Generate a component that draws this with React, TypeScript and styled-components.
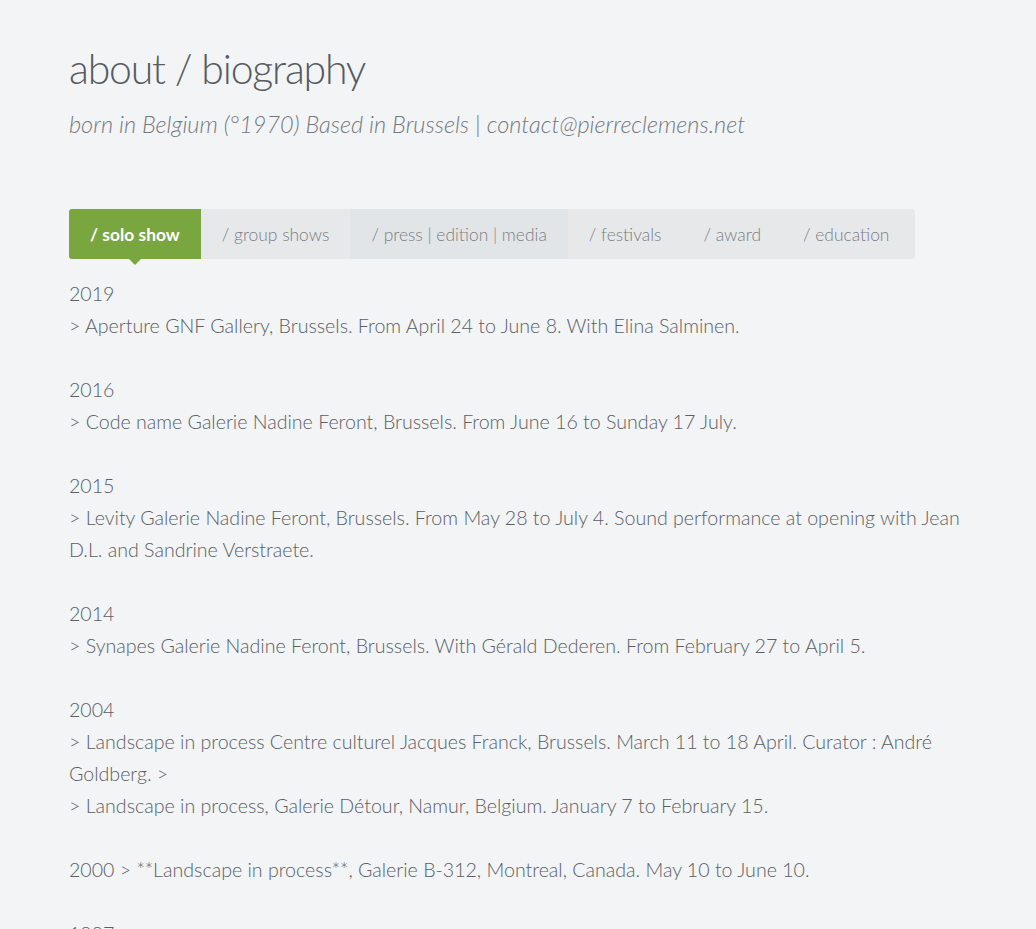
import React, { useState } from 'react';
import styled, { createGlobalStyle } from 'styled-components';

const tabs = [
  '/ solo show',
  '/ group shows',
  '/ press | edition | media',
  '/ festivals',
  '/ award',
  '/ education',
];

const entries: { year?: string; lines: string[] }[] = [
  { year: '2019', lines: ['> Aperture GNF Gallery, Brussels. From April 24 to June 8. With Elina Salminen.'] },
  { year: '2016', lines: ['> Code name Galerie Nadine Feront, Brussels. From June 16 to Sunday 17 July.'] },
  {
    year: '2015',
    lines: ['> Levity Galerie Nadine Feront, Brussels. From May 28 to July 4. Sound performance at opening with Jean D.L. and Sandrine Verstraete.'],
  },
  { year: '2014', lines: ['> Synapes Galerie Nadine Feront, Brussels. With Gérald Dederen. From February 27 to April 5.'] },
  {
    year: '2004',
    lines: [
      '> Landscape in process Centre culturel Jacques Franck, Brussels. March 11 to 18 April. Curator : André Goldberg. >',
      '> Landscape in process, Galerie Détour, Namur, Belgium. January 7 to February 15.',
    ],
  },
  { lines: ['2000 > **Landscape in process**, Galerie B-312, Montreal, Canada. May 10 to June 10.'] },
  { year: '1997', lines: ['> Galerie Détour, Namur, Belgium.'] },
];

const App = () => {
  const [active, setActive] = useState(0);

  return (
    <>
      <GlobalStyle />
      <Page>
        <Title>about / biography</Title>
        <Subtitle>born in Belgium (°1970) Based in Brussels | contact@pierreclemens.net</Subtitle>
        <TabBar>
          {tabs.map((t, i) => (
            <Tab key={t} $active={i === active} $hover={i === 2} onClick={() => setActive(i)}>
              {t}
            </Tab>
          ))}
        </TabBar>
        <Content>
          {entries.map((e, i) => (
            <Entry key={i}>
              {e.year && (
                <>
                  {e.year}
                  <br />
                </>
              )}
              {e.lines.map((l, j) => (
                <React.Fragment key={j}>
                  {j > 0 && <br />}
                  {l}
                </React.Fragment>
              ))}
            </Entry>
          ))}
        </Content>
      </Page>
    </>
  );
};

export default App;

const GlobalStyle = createGlobalStyle`
  body {
    margin: 0;
    background: #f2f4f6;
    font-family: Lato, "Open Sans", sans-serif;
    color: #5b6065;
  }
`;

const Page = styled.div`
  padding: 42px 0 0 69px;
  width: 898px;
`;

const Title = styled.h1`
  margin: 0;
  font-size: 41px;
  font-weight: 300;
  line-height: 54px;
  color: #565b60;
  letter-spacing: -1.2px;
`;

const Subtitle = styled.div`
  margin-top: 13px;
  font-size: 23.5px;
  font-weight: 300;
  font-style: italic;
  line-height: 30px;
  color: #75797e;
`;

const TabBar = styled.div`
  display: flex;
  margin-top: 70px;
  width: 846px;
  height: 50px;
  background: #e7e8ea;
  border-radius: 3px;
`;

const Tab = styled.div<{ $active?: boolean; $hover?: boolean }>`
  position: relative;
  display: flex;
  align-items: center;
  padding: 0 21px;
  font-size: 17.4px;
  font-weight: ${p => (p.$active ? 700 : 300)};
  color: ${p => (p.$active ? '#ffffff' : '#7a7e83')};
  background: ${p => (p.$active ? '#7aa63f' : p.$hover ? '#e2e5e8' : 'transparent')};
  border-radius: ${p => (p.$active ? '3px 0 0 3px' : '0')};
  cursor: pointer;
  white-space: nowrap;

  &::after {
    content: '';
    display: ${p => (p.$active ? 'block' : 'none')};
    position: absolute;
    left: 50%;
    bottom: -6px;
    margin-left: -6px;
    border-left: 6px solid transparent;
    border-right: 6px solid transparent;
    border-top: 6px solid #7aa63f;
  }
`;

const Content = styled.div`
  margin-top: 19px;
`;

const Entry = styled.p`
  margin: 0 0 32px;
  font-size: 19.6px;
  font-weight: 300;
  line-height: 32px;
  color: #5b6065;
`;
